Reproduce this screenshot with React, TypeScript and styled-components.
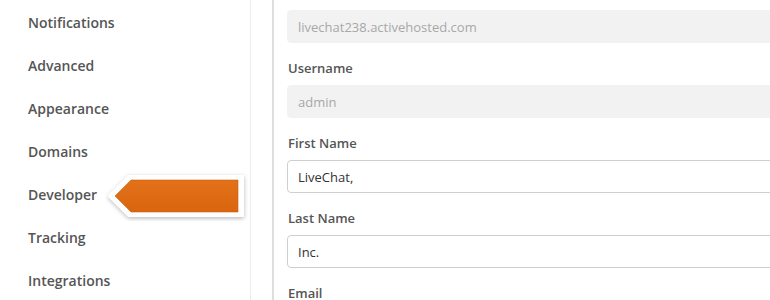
import * as React from "react";
import styled, { createGlobalStyle } from "styled-components";

const GlobalStyle = createGlobalStyle`
  html, body {
    margin: 0;
    padding: 0;
    background: #fff;
    overflow: hidden;
  }
  body {
    font-family: "Open Sans", "Liberation Sans", sans-serif;
    -webkit-font-smoothing: antialiased;
  }
`;

const menuItems = [
  "Notifications",
  "Advanced",
  "Appearance",
  "Domains",
  "Developer",
  "Tracking",
  "Integrations",
];

const fields = [
  { label: null, value: "livechat238.activehosted.com", disabled: true },
  { label: "Username", value: "admin", disabled: true },
  { label: "First Name", value: "LiveChat,", disabled: false },
  { label: "Last Name", value: "Inc.", disabled: false },
  { label: "Email", value: null, disabled: false },
];

function PointerArrow() {
  return (
    <ArrowWrap width="146" height="50" viewBox="0 0 146 50">
      <defs>
        <filter id="arrowShadow" x="-10%" y="-30%" width="120%" height="160%">
          <feDropShadow dx="0" dy="1.5" stdDeviation="2" floodColor="#000" floodOpacity="0.28" />
        </filter>
        <linearGradient id="arrowFill" x1="0" y1="0" x2="0" y2="1">
          <stop offset="0" stopColor="#e2711a" />
          <stop offset="1" stopColor="#d9660f" />
        </linearGradient>
      </defs>
      <polygon
        points="5,25 25,5 139,5 139,45 25,45"
        fill="#fff"
        stroke="#fff"
        strokeWidth="2"
        strokeLinejoin="round"
        filter="url(#arrowShadow)"
      />
      <polygon points="11,25 27,9 134,9 134,41 27,41" fill="url(#arrowFill)" stroke="#cf5f0c" strokeWidth="0.6" />
    </ArrowWrap>
  );
}

export default function App() {
  return (
    <>
      <GlobalStyle />
      <Page>
        <Sidebar>
          {menuItems.map((item) => (
            <MenuItem key={item}>{item}</MenuItem>
          ))}
          <PointerArrow />
        </Sidebar>
        <Main>
          <Panel>
            {fields.map((f, i) => (
              <Field key={i}>
                {f.label && <Label>{f.label}</Label>}
                {f.value !== null && (
                  <Input readOnly disabled={f.disabled} value={f.value} />
                )}
              </Field>
            ))}
          </Panel>
        </Main>
      </Page>
    </>
  );
}

const Page = styled.div`
  display: flex;
  width: 770px;
  height: 300px;
  overflow: hidden;
`;

const Sidebar = styled.nav`
  position: relative;
  flex: 0 0 250px;
  display: flex;
  flex-direction: column;
  padding-top: 1px;
  border-right: 1px solid #ececec;
`;

const MenuItem = styled.a`
  display: block;
  height: 43px;
  line-height: 43px;
  padding-left: 28px;
  font-size: 14px;
  font-weight: 600;
  color: #555;
  text-decoration: none;
`;

const ArrowWrap = styled.svg`
  position: absolute;
  left: 104px;
  top: 171px;
`;

const Main = styled.main`
  flex: 1;
  padding-left: 21px;
  min-width: 0;
`;

const Panel = styled.section`
  height: 100%;
  border-left: 2px solid #dedede;
  padding: 10px 0 0 13px;
`;

const Field = styled.div`
  display: flex;
  flex-direction: column;
`;

const Label = styled.label`
  margin: 16px 0 8px 1px;
  line-height: 18px;
  font-size: 13px;
  font-weight: 600;
  color: #555;
`;

const Input = styled.input`
  box-sizing: border-box;
  width: 520px;
  height: 33px;
  padding: 0 10px;
  font-family: "Open Sans", "Liberation Sans", sans-serif;
  font-size: 13px;
  color: #333;
  background: #fff;
  border: 1px solid #cfcfcf;
  border-radius: 4px;
  outline: none;

  &:disabled {
    color: #a8a8a8;
    background: #f2f2f2;
    border-color: #f2f2f2;
  }
`;
